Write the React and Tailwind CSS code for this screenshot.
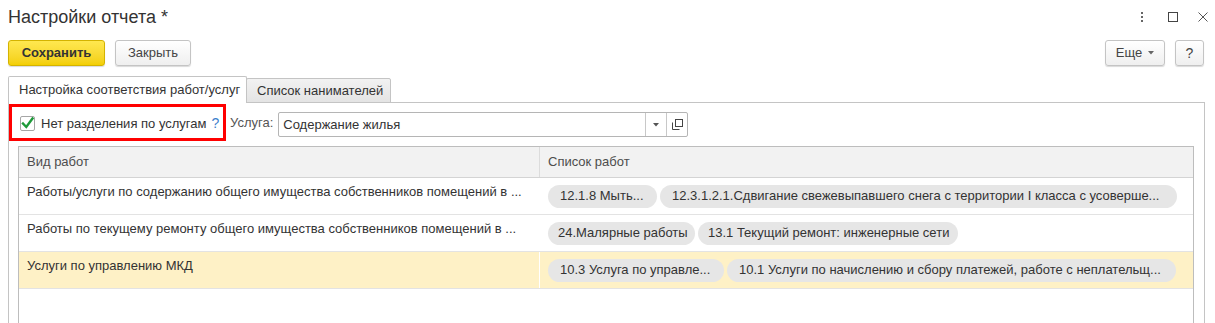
export default function App() {
  const rows = [
    {
      name: "Работы/услуги по содержанию общего имущества собственников помещений в ...",
      pills: [
        { t: "12.1.8 Мыть...", w: "w-[109px] px-[12px]" },
        { t: "12.3.1.2.1.Сдвигание свежевыпавшего снега с территории I класса с усоверше...", w: "w-[517px] px-[12px]" },
      ],
      sel: false,
    },
    {
      name: "Работы по текущему ремонту общего имущества собственников помещений в ...",
      pills: [
        { t: "24.Малярные работы", w: "w-[147px] px-[10px]" },
        { t: "13.1 Текущий ремонт: инженерные сети", w: "w-[260px] px-[10px]" },
      ],
      sel: false,
    },
    {
      name: "Услуги по управлению МКД",
      pills: [
        { t: "10.3 Услуга по управле...", w: "w-[176px] px-[12px]" },
        { t: "10.1 Услуги по начислению и сбору платежей, работе с неплательщ...", w: "w-[449px] px-[12px]" },
      ],
      sel: true,
    },
  ];

  return (
    <div className="w-[1215px] h-[323px] overflow-hidden bg-white text-[#333] font-['Liberation_Sans','Arial',sans-serif] text-[13px] flex flex-col">
      {/* Title bar */}
      <div className="h-[40px] shrink-0 flex items-start pl-[8px] pr-[7px] pt-[5px]">
        <div className="text-[18px] leading-[24px] text-[#333]">Настройки отчета *</div>
        <div className="ml-auto flex items-center mt-[7px]">
          <svg width="10" height="10" viewBox="0 0 10 10" className="block">
            <rect x="4" y="0" width="2" height="2" fill="#666" />
            <rect x="4" y="4" width="2" height="2" fill="#666" />
            <rect x="4" y="8" width="2" height="2" fill="#666" />
          </svg>
          <svg width="10" height="10" viewBox="0 0 10 10" className="block ml-[21px]">
            <rect x="0.5" y="0.5" width="9" height="9" fill="none" stroke="#444" strokeWidth="1" />
          </svg>
          <svg width="10" height="10" viewBox="0 0 10 10" className="block ml-[20px]">
            <path d="M0.5 0.5 L9.5 9.5 M9.5 0.5 L0.5 9.5" stroke="#555" strokeWidth="1" />
          </svg>
        </div>
      </div>

      {/* Toolbar */}
      <div className="h-[26px] shrink-0 flex items-center pl-[8px] pr-[11px]">
        <button className="h-[26px] w-[97px] rounded-[3px] border border-[#d4b300] bg-gradient-to-b from-[#ffe84f] to-[#f3cf00] font-bold text-[13px] text-[#333] shadow-[0_1px_1px_rgba(0,0,0,0.15)]">
          Сохранить
        </button>
        <button className="ml-[10px] h-[26px] w-[76px] rounded-[3px] border border-[#c4c4c4] bg-gradient-to-b from-white to-[#efefef] text-[13px] text-[#444] shadow-[0_1px_1px_rgba(0,0,0,0.15)]">
          Закрыть
        </button>
        <button className="ml-auto h-[26px] w-[60px] rounded-[3px] border border-[#c4c4c4] bg-gradient-to-b from-white to-[#efefef] text-[13px] text-[#444] shadow-[0_1px_1px_rgba(0,0,0,0.15)] flex items-center justify-center">
          <span>Еще</span>
          <svg width="6" height="4" viewBox="0 0 6 4" className="ml-[6px] block">
            <path d="M0 0 L6 0 L3 3.5 Z" fill="#666" />
          </svg>
        </button>
        <button className="ml-[10px] h-[26px] w-[29px] rounded-[3px] border border-[#c4c4c4] bg-gradient-to-b from-white to-[#efefef] text-[14px] text-[#444] shadow-[0_1px_1px_rgba(0,0,0,0.15)]">
          ?
        </button>
      </div>

      {/* Tabs */}
      <div className="mt-[10px] shrink-0 flex items-end pl-[8px] -mb-px relative z-10">
        <div className="h-[27px] w-[239px] border border-b-0 border-[#c4c4c4] bg-white rounded-t-[2px] flex items-center pl-[10px] text-[13px] text-[#333]">
          Настройка соответствия работ/услуг
        </div>
        <div className="h-[25px] w-[145px] -ml-px border border-[#c4c4c4] bg-gradient-to-b from-[#f2f2f2] to-[#e4e4e4] rounded-t-[2px] flex items-center pl-[10px] text-[13px] text-[#333]">
          Список нанимателей
        </div>
      </div>

      {/* Panel */}
      <div className="ml-[8px] mr-[10px] flex-1 border border-[#c4c4c4] flex flex-col">
        <div className="flex items-start">
          <div className="mt-[1px] h-[37px] w-[217px] border-[3px] border-[#ff0000] flex items-center pl-[8px] pt-[2px]">
            <div className="w-[15px] h-[15px] border border-[#a6a6a6] rounded-[2px] bg-white relative shrink-0">
              <svg width="15" height="15" viewBox="0 0 15 15" className="absolute -left-px -top-px">
                <path d="M3 7.5 L6.3 11 L12.5 2.5" fill="none" stroke="#1e9a3a" strokeWidth="2.4" strokeLinecap="square" />
              </svg>
            </div>
            <span className="ml-[6px] text-[#333] whitespace-nowrap">Нет разделения по услугам</span>
            <span className="ml-[5px] text-[#3d7fcc] text-[14px]">?</span>
          </div>
          <div className="mt-[12px] ml-[4px] text-[#555] leading-[16px]">Услуга:</div>
          <div className="mt-[9px] ml-[5px] h-[25px] w-[410px] border border-[#b5b5b5] rounded-[2px] flex items-stretch">
            <div className="flex-1 flex items-center pl-[4px] text-[#333]">Содержание жилья</div>
            <div className="w-[21px] border-l border-[#c8c8c8] flex items-center justify-center">
              <svg width="6" height="4" viewBox="0 0 6 4" className="block">
                <path d="M0 0 L6 0 L3 3.5 Z" fill="#555" />
              </svg>
            </div>
            <div className="w-[21px] border-l border-[#c8c8c8] flex items-center justify-center">
              <svg width="11" height="11" viewBox="0 0 11 11" className="block">
                <rect x="3.5" y="0.5" width="7" height="7" fill="white" stroke="#444" strokeWidth="1" />
                <path d="M0.5 3.5 L0.5 10.5 L7.5 10.5" fill="none" stroke="#444" strokeWidth="1" />
              </svg>
            </div>
          </div>
        </div>

        {/* Table */}
        <div className="mt-[5px] ml-[9px] mr-[10px] h-[220px] shrink-0 border border-[#bdbdbd] flex flex-col">
          <div className="h-[31px] shrink-0 flex bg-[#f2f2f2] border-b border-[#d4d4d4] text-[#4d4d4d]">
            <div className="w-[520px] flex items-center pl-[8px]">Вид работ</div>
            <div className="flex-1 border-l border-[#dcdcdc] flex items-center pl-[8px]">Список работ</div>
          </div>
          {rows.map((r, i) => (
            <div
              key={i}
              className={
                r.sel
                  ? "h-[37px] shrink-0 flex border-b border-[#e3e3e3] bg-[#fef1c6]"
                  : "h-[37px] shrink-0 flex border-b border-[#e3e3e3]"
              }
            >
              <div className="w-[520px] pl-[8px] pt-[6px] leading-[16px] whitespace-nowrap overflow-hidden text-[#333]">
                {r.name}
              </div>
              <div className="flex-1 border-l border-white flex items-center pl-[8px] gap-[3px]">
                {r.pills.map((p, j) => (
                  <div
                    key={j}
                    className={
                      "h-[23px] shrink-0 rounded-full bg-[#e6e6e6] flex items-center whitespace-nowrap overflow-hidden text-[#333] " +
                      p.w
                    }
                  >
                    {p.t}
                  </div>
                ))}
              </div>
            </div>
          ))}
        </div>
      </div>
    </div>
  );
}
